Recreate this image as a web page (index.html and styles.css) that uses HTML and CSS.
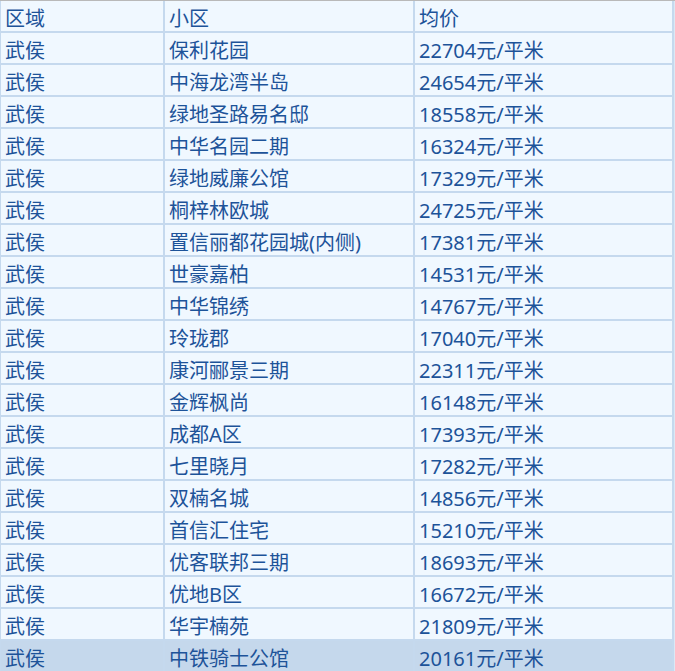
FILE: index.html
```html
<!DOCTYPE html>
<html lang="zh-CN">
<head>
<meta charset="utf-8">
<title>均价</title>
<link rel="stylesheet" href="styles.css">
</head>
<body>
<div class="wrap">
<table class="price">
<tr><td class="c1">区域</td><td class="c2">小区</td><td class="c3">均价</td></tr>
<tr><td>武侯</td><td>保利花园</td><td>22704元/平米</td></tr>
<tr><td>武侯</td><td>中海龙湾半岛</td><td>24654元/平米</td></tr>
<tr><td>武侯</td><td>绿地圣路易名邸</td><td>18558元/平米</td></tr>
<tr><td>武侯</td><td>中华名园二期</td><td>16324元/平米</td></tr>
<tr><td>武侯</td><td>绿地威廉公馆</td><td>17329元/平米</td></tr>
<tr><td>武侯</td><td>桐梓林欧城</td><td>24725元/平米</td></tr>
<tr><td>武侯</td><td>置信丽都花园城(内侧)</td><td>17381元/平米</td></tr>
<tr><td>武侯</td><td>世豪嘉柏</td><td>14531元/平米</td></tr>
<tr><td>武侯</td><td>中华锦绣</td><td>14767元/平米</td></tr>
<tr><td>武侯</td><td>玲珑郡</td><td>17040元/平米</td></tr>
<tr><td>武侯</td><td>康河郦景三期</td><td>22311元/平米</td></tr>
<tr><td>武侯</td><td>金辉枫尚</td><td>16148元/平米</td></tr>
<tr><td>武侯</td><td>成都A区</td><td>17393元/平米</td></tr>
<tr><td>武侯</td><td>七里晓月</td><td>17282元/平米</td></tr>
<tr><td>武侯</td><td>双楠名城</td><td>14856元/平米</td></tr>
<tr><td>武侯</td><td>首信汇住宅</td><td>15210元/平米</td></tr>
<tr><td>武侯</td><td>优客联邦三期</td><td>18693元/平米</td></tr>
<tr><td>武侯</td><td>优地B区</td><td>16672元/平米</td></tr>
<tr><td>武侯</td><td>华宇楠苑</td><td>21809元/平米</td></tr>
<tr class="hl"><td>武侯</td><td>中铁骑士公馆</td><td>20161元/平米</td></tr>
</table>
</div>
</body>
</html>
```
FILE: styles.css
```css
html, body {
  margin: 0;
  padding: 0;
  background: #dce8f5;
}
.wrap {
  border-top: 1px solid #b9b9b9;
  overflow: hidden;
  height: 670px;
}
.price {
  border-collapse: separate;
  border-spacing: 2px;
  background: #c5d9ee;
  table-layout: fixed;
  width: 675px;
  margin: -2px 0 0 -1px;
  font-family: "Noto Sans", "Noto Sans CJK SC", sans-serif;
  font-size: 20px;
  color: #1d5399;
}
.price td {
  box-sizing: border-box;
  height: 30px;
  padding: 6px 0 0 4px;
  line-height: 24px;
  background: #f0f8ff;
  white-space: nowrap;
  vertical-align: top;
}
.price td.c1 { width: 162px; }
.price td.c2 { width: 248px; }
.price td.c3 { width: 257px; }
.price tr.hl td {
  background: #c5d8ec;
}
```
